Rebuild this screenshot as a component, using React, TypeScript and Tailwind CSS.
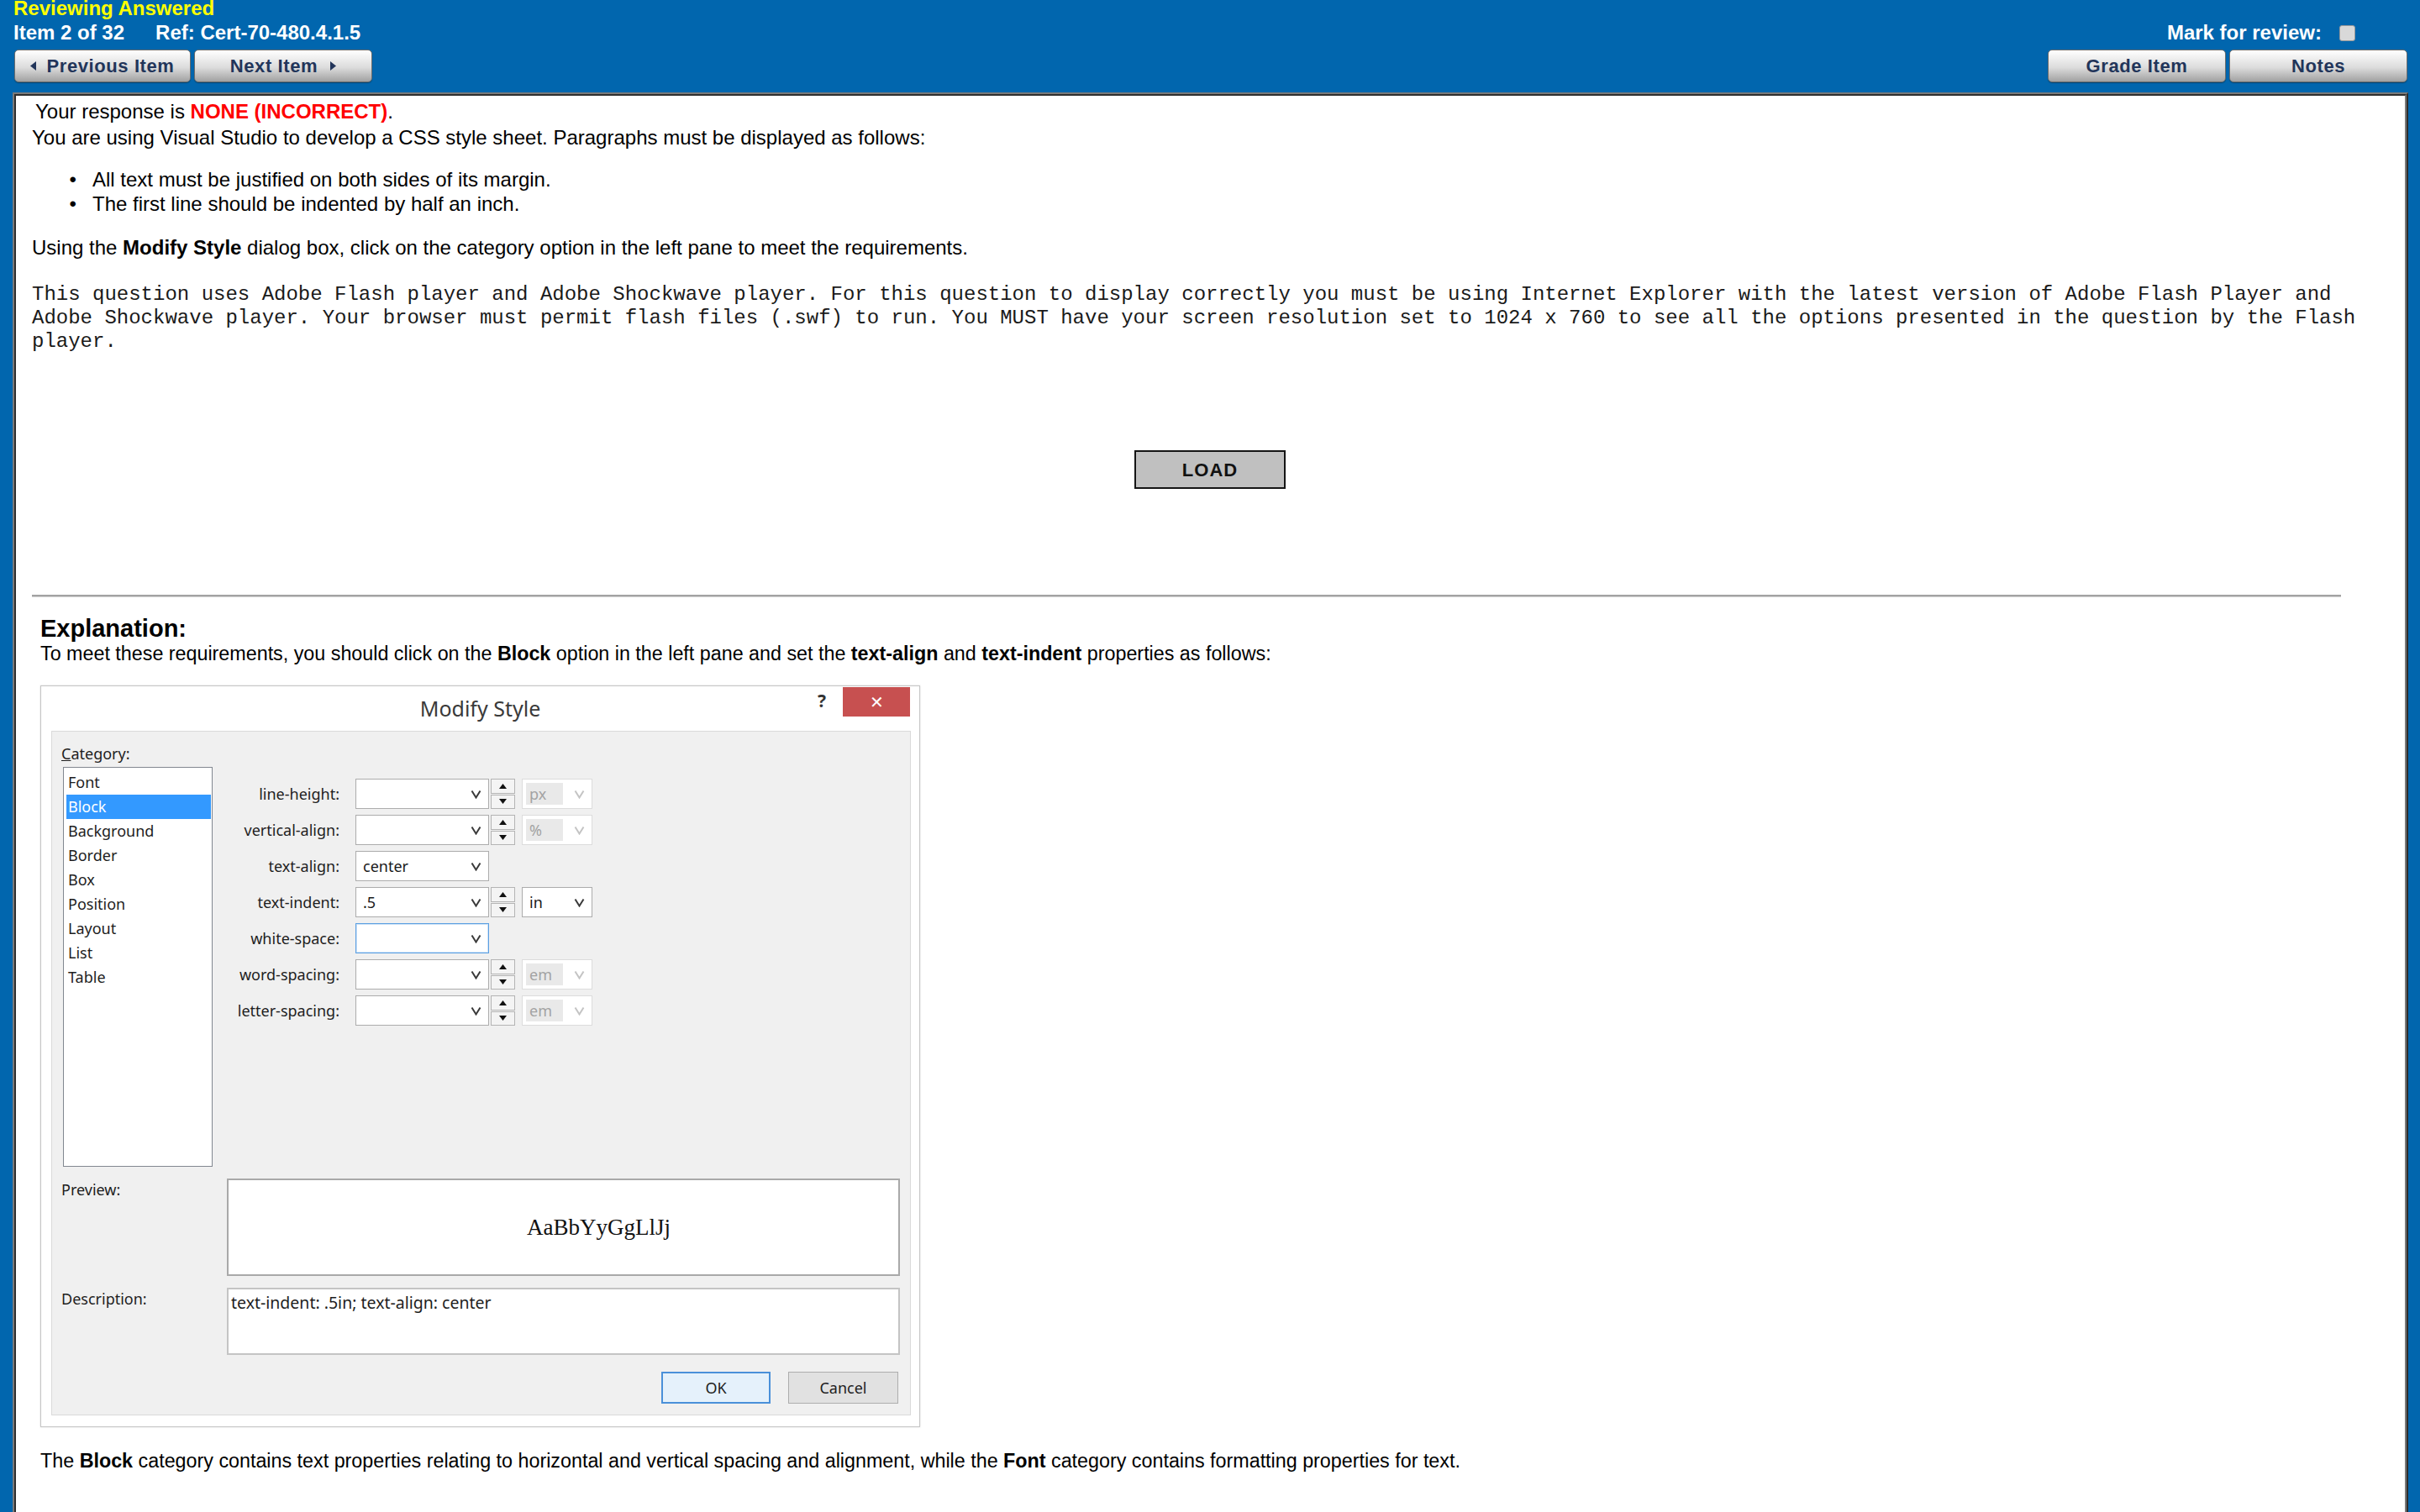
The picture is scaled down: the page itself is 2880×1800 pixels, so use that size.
import React from "react";

const Chevron = ({ color = "#3a3a3a" }: { color?: string }) => (
  <svg width="13" height="11" viewBox="0 0 13 11" className="shrink-0">
    <polyline points="1.5,1.5 6.5,9.5 11.5,1.5" fill="none" stroke={color} strokeWidth="2" />
  </svg>
);

const Select = ({ value, focus }: { value?: string; focus?: boolean }) => (
  <div
    className={`w-[159px] h-[36px] bg-white border flex items-center justify-between pl-[8px] pr-[8px] ${
      focus ? "border-[#5b9fe2] shadow-[inset_0_0_0_1px_#cfe3f7]" : "border-[#acacac]"
    }`}
  >
    <span className="text-[#1a1a1a]">{value ?? ""}</span>
    <Chevron />
  </div>
);

const Spinner = () => (
  <div className="w-[29px] h-[36px] flex flex-col gap-[1px] ml-[2px]">
    <div className="flex-1 border border-[#b4b4b4] bg-[#f4f4f4] flex items-center justify-center">
      <svg width="9" height="6" viewBox="0 0 9 6">
        <polygon points="0,6 4.5,0 9,6" fill="#111" />
      </svg>
    </div>
    <div className="flex-1 border border-[#b4b4b4] bg-[#f4f4f4] flex items-center justify-center">
      <svg width="9" height="6" viewBox="0 0 9 6">
        <polygon points="0,0 4.5,6 9,0" fill="#111" />
      </svg>
    </div>
  </div>
);

const Unit = ({ value, enabled }: { value: string; enabled?: boolean }) =>
  enabled ? (
    <div className="ml-[8px] w-[84px] h-[36px] bg-white border border-[#acacac] flex items-center justify-between pl-[8px] pr-[8px]">
      <span className="text-[#1a1a1a]">{value}</span>
      <Chevron />
    </div>
  ) : (
    <div className="ml-[8px] w-[84px] h-[36px] bg-white border border-[#dcdcdc] flex items-center justify-between pl-[4px] pr-[8px]">
      <span className="bg-[#e9e9e9] text-[#a3a3a3] h-[26px] w-[44px] pl-[4px] flex items-center">{value}</span>
      <Chevron color="#c4c4c4" />
    </div>
  );

const Row = ({
  label,
  value,
  spin,
  unit,
  unitEnabled,
  focus,
}: {
  label: string;
  value?: string;
  spin?: boolean;
  unit?: string;
  unitEnabled?: boolean;
  focus?: boolean;
}) => (
  <div className="flex items-center h-[36px]">
    <div className="w-[151px] text-right text-[#1e1e1e]">{label}</div>
    <div className="ml-[19px]">
      <Select value={value} focus={focus} />
    </div>
    {spin && <Spinner />}
    {unit && <Unit value={unit} enabled={unitEnabled} />}
  </div>
);

const HeaderButton = ({ children, w }: { children: React.ReactNode; w: string }) => (
  <div
    className={`${w} h-[39px] rounded-[5px] border border-[#6e6e6e] bg-linear-to-b from-white via-[#dcdcdc] via-55% to-[#a2a2a2] shadow-[inset_0_1px_0_#ffffff,0_1px_1px_rgba(0,0,0,0.35)] flex items-center justify-center text-[22px] font-bold tracking-[0.6px] text-[#22355a]`}
  >
    {children}
  </div>
);

const ArrowLeft = () => (
  <svg width="7" height="11" viewBox="0 0 7 11">
    <polygon points="7,0 0,5.5 7,11" fill="#22355a" />
  </svg>
);
const ArrowRight = () => (
  <svg width="7" height="11" viewBox="0 0 7 11">
    <polygon points="0,0 7,5.5 0,11" fill="#22355a" />
  </svg>
);

export default function App() {
  const cats = ["Font", "Block", "Background", "Border", "Box", "Position", "Layout", "List", "Table"];
  return (
    <div className="w-[2880px] h-[1800px] overflow-hidden bg-[#0166ae] flex flex-col font-['Liberation_Sans',Arial,sans-serif]">
      {/* Header */}
      <div className="h-[110px] shrink-0 flex justify-between pl-[16px] pr-[15px]">
        <div className="flex flex-col">
          <div className="h-[20px] leading-[20px] text-[24px] font-bold text-[#ffff00]">Reviewing Answered</div>
          <div className="mt-[4px] h-[30px] leading-[30px] text-[24px] font-bold text-white flex">
            <span>Item 2 of 32</span>
            <span className="ml-[37px]">Ref: Cert-70-480.4.1.5</span>
          </div>
          <div className="mt-[5px] ml-[1px] flex gap-[4px]">
            <HeaderButton w="w-[210px]">
              <ArrowLeft />
              <span className="ml-[12px]">Previous Item</span>
            </HeaderButton>
            <HeaderButton w="w-[212px]">
              <span className="mr-[15px]">Next Item</span>
              <ArrowRight />
            </HeaderButton>
          </div>
        </div>
        <div className="flex flex-col items-end">
          <div className="mt-[24px] h-[30px] flex items-center pr-[62px] text-[24px] font-bold text-white">
            <span>Mark for review:</span>
            <span className="ml-[21px] w-[19px] h-[19px] rounded-[3px] bg-[#d9d9d9] border border-[#9a9a9a]" />
          </div>
          <div className="mt-[5px] flex gap-[4px]">
            <HeaderButton w="w-[212px]">Grade Item</HeaderButton>
            <HeaderButton w="w-[212px]">Notes</HeaderButton>
          </div>
        </div>
      </div>

      {/* Panel */}
      <div className="flex-1 ml-[15px] mr-[14px] border-2 border-[#7a7a7a] border-r-[#2e2e2e] border-b-0 flex flex-col">
        <div className="flex-1 border-2 border-[#2e2e2e] border-r-[#7a7a7a] border-b-0 bg-white pl-[19px] pr-[20px] pt-[3px] text-[24px] text-black">
          <div className="leading-[31px] ml-[4px]">
            Your response is <span className="font-bold text-[#ff0000]">NONE (INCORRECT)</span>.
          </div>
          <div className="leading-[31px]">
            You are using Visual Studio to develop a CSS style sheet. Paragraphs must be displayed as follows:
          </div>
          <div className="mt-[20px]">
            <div className="flex leading-[29px]">
              <span className="w-[72px] text-right pr-[19px]">•</span>
              <span>All text must be justified on both sides of its margin.</span>
            </div>
            <div className="flex leading-[29px]">
              <span className="w-[72px] text-right pr-[19px]">•</span>
              <span>The first line should be indented by half an inch.</span>
            </div>
          </div>
          <div className="mt-[23px] leading-[30px]">
            Using the <span className="font-bold">Modify Style</span> dialog box, click on the category option in the
            left pane to meet the requirements.
          </div>
          <div className="mt-[27px] font-['Liberation_Mono','Courier_New',monospace] text-[24px] leading-[28px] text-[#1a1a1a] whitespace-nowrap">
            This question uses Adobe Flash player and Adobe Shockwave player. For this question to display correctly
            you must be using Internet Explorer with the latest version of Adobe Flash Player and
            <br />
            Adobe Shockwave player. Your browser must permit flash files (.swf) to run. You MUST have your screen
            resolution set to 1024 x 760 to see all the options presented in the question by the Flash
            <br />
            player.
          </div>
          <div className="mt-[115px] flex justify-center">
            <div className="w-[180px] h-[46px] border-2 border-[#151515] bg-[#c0c0c0] flex items-center justify-center text-[22px] font-bold tracking-[1px] text-[#111]">
              LOAD
            </div>
          </div>
          <div className="mt-[126px] w-[2748px] h-[3px] bg-[#a3a3a3] border-b border-[#d0d0d0]" />

          <div className="ml-[10px] text-[23.3px]">
            <div className="mt-[21px] leading-[32px] text-[29px] font-bold">Explanation:</div>
            <div className="leading-[28px]">
              To meet these requirements, you should click on the <span className="font-bold">Block</span> option in
              the left pane and set the <span className="font-bold">text-align</span> and{" "}
              <span className="font-bold">text-indent</span> properties as follows:
            </div>

            {/* Dialog */}
            <div className="mt-[24px] w-[1047px] h-[883px] border border-[#c6c6c6] bg-white flex flex-col shadow-[0_0_2px_rgba(0,0,0,0.15)] font-['Noto_Sans','Open_Sans',sans-serif] text-[18px] text-[#1e1e1e]">
              <div className="h-[53px] shrink-0 grid grid-cols-[1fr_auto_1fr]">
                <div />
                <div className="flex items-center text-[25px] text-[#3a3a3a] pt-[1px]">Modify Style</div>
                <div className="flex justify-end items-start">
                  <span className="mt-[4px] mr-[20px] text-[21px] font-bold text-[#333] leading-[26px]">?</span>
                  <div className="mt-[1px] mr-[11px] w-[80px] h-[35px] bg-[#c75050] flex items-center justify-center text-white text-[20px] leading-none">
                    ✕
                  </div>
                </div>
              </div>
              <div className="flex-1 ml-[12px] mr-[10px] mb-[13px] bg-[#f0f0f0] border border-[#dadada] pl-[11px] pr-[12px] pt-[13px] flex flex-col">
                <div className="flex">
                  <div className="w-[180px] flex flex-col">
                    <div className="h-[26px] leading-[26px]">
                      <span className="underline">C</span>ategory:
                    </div>
                    <div className="mt-[3px] ml-[2px] w-[178px] h-[476px] bg-white border border-[#828790] pt-[3px] pl-[3px] pr-[1px]">
                      {cats.map((c) => (
                        <div
                          key={c}
                          className={`h-[29px] leading-[29px] pl-[2px] ${c === "Block" ? "bg-[#3399ff] text-white" : "text-[#1e1e1e]"}`}
                        >
                          {c}
                        </div>
                      ))}
                    </div>
                  </div>
                  <div className="mt-[43px] flex flex-col gap-[7px]">
                    <Row label="line-height:" spin unit="px" />
                    <Row label="vertical-align:" spin unit="%" />
                    <Row label="text-align:" value="center" />
                    <Row label="text-indent:" value=".5" spin unit="in" unitEnabled />
                    <Row label="white-space:" focus />
                    <Row label="word-spacing:" spin unit="em" />
                    <Row label="letter-spacing:" spin unit="em" />
                  </div>
                </div>
                <div className="mt-[14px] flex">
                  <div className="w-[197px] h-[26px] leading-[26px]">Preview:</div>
                  <div className="w-[801px] h-[116px] bg-white border-2 border-[#a9a9a9] flex items-center justify-center pl-[84px] font-['Liberation_Serif','Times_New_Roman',serif] text-[27px] text-[#111]">
                    AaBbYyGgLlJj
                  </div>
                </div>
                <div className="mt-[14px] flex">
                  <div className="w-[197px] h-[26px] leading-[26px]">Description:</div>
                  <div className="w-[801px] h-[80px] bg-white border-2 border-[#c4c4c4] pl-[3px] pt-[3px] leading-[26px] text-[19.5px]">
                    text-indent: .5in; text-align: center
                  </div>
                </div>
                <div className="mt-[20px] flex justify-end gap-[21px] pr-[2px]">
                  <div className="w-[130px] h-[38px] border-2 border-[#4a90d9] bg-[#e5f1fb] flex items-center justify-center">
                    OK
                  </div>
                  <div className="w-[131px] h-[38px] border border-[#adadad] bg-[#e1e1e1] flex items-center justify-center">
                    Cancel
                  </div>
                </div>
              </div>
            </div>

            <div className="mt-[26px] leading-[28px]">
              The <span className="font-bold">Block</span> category contains text properties relating to horizontal and
              vertical spacing and alignment, while the <span className="font-bold">Font</span> category contains
              formatting properties for text.
            </div>
          </div>
        </div>
      </div>
    </div>
  );
}
